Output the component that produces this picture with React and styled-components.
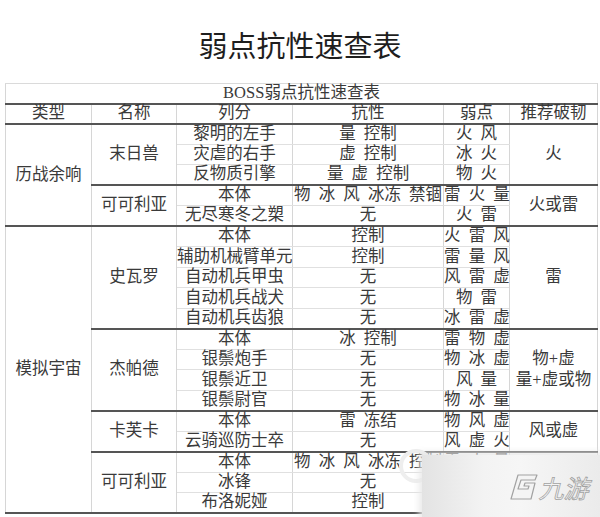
import styled, { createGlobalStyle } from "styled-components";

const GlobalStyle = createGlobalStyle`
    html, body {
        margin: 0;
        padding: 0;
        background: #ffffff;
    }
`;

const Page = styled.div`
    position: relative;
    width: 600px;
    height: 517px;
    overflow: hidden;
    background: #ffffff;
    font-family: "Liberation Serif", "Noto Sans CJK SC", serif;
`;

const Heading = styled.h1`
    margin: 0;
    padding-top: 26px;
    height: 83px;
    box-sizing: border-box;
    text-align: center;
    font-family: "Noto Sans CJK SC", sans-serif;
    font-weight: 400;
    font-size: 29px;
    line-height: 36px;
    color: #1e1e1e;
`;

const Table = styled.table`
    margin-left: 5px;
    width: 592px;
    table-layout: fixed;
    border-collapse: collapse;
    font-size: 16.5px;
    color: #3a3a3a;
    word-spacing: 4px;
`;

const Row = styled.tr`
    height: ${(p) => p.$h}px;
`;

const Cell = styled.td`
    padding: 0;
    text-align: center;
    vertical-align: middle;
    white-space: nowrap;
    line-height: ${(p) => (p.$lh ? p.$lh : 1)};
    border-left: 1px solid #d6d6d6;
    border-right: 1px solid #d6d6d6;
    border-bottom: ${(p) => (p.$thick ? "2px solid #555" : "1px solid #e0e0e0")};
    border-top: ${(p) => (p.$top ? "1px solid #dadada" : "none")};
`;

const Watermark = styled.div`
    position: absolute;
    left: 422px;
    top: 455px;
    width: 178px;
    height: 62px;
    background: linear-gradient(90deg, #e3e3e3 0%, #f3f3f3 35%, #f6f6f6 55%, #ebebeb 100%);
    box-shadow: 0 0 6px 3px rgba(232, 232, 232, 0.9);
    display: flex;
    align-items: center;
    justify-content: flex-end;
    gap: 2px;
    padding-right: 9px;
    padding-top: 2px;
    box-sizing: border-box;
`;

const Brand = styled.span`
    font-family: "Noto Sans CJK SC", sans-serif;
    font-size: 25px;
    line-height: 1;
    color: #f4f4f4;
    -webkit-text-stroke: 0.8px #a2a2a2;
    transform: skewX(-14deg);
`;

const FaintRing = styled.svg`
    position: absolute;
    left: 396px;
    top: 446px;
`;

const groups = [
    {
        type: "历战余响",
        bosses: [
            {
                name: "末日兽",
                rec: ["火"],
                rows: [
                    ["黎明的左手", "量 控制", "火 风"],
                    ["灾虐的右手", "虚 控制", "冰 火"],
                    ["反物质引擎", "量 虚 控制", "物 火"],
                ],
            },
            {
                name: "可可利亚",
                rec: ["火或雷"],
                rows: [
                    ["本体", "物 冰 风 冰冻 禁锢", "雷 火 量"],
                    ["无尽寒冬之槊", "无", "火 雷"],
                ],
            },
        ],
    },
    {
        type: "模拟宇宙",
        bosses: [
            {
                name: "史瓦罗",
                rec: ["雷"],
                rows: [
                    ["本体", "控制", "火 雷 风"],
                    ["辅助机械臂单元", "控制", "雷 量 风"],
                    ["自动机兵甲虫", "无", "风 雷 虚"],
                    ["自动机兵战犬", "无", "物 雷"],
                    ["自动机兵齿狼", "无", "冰 雷 虚"],
                ],
            },
            {
                name: "杰帕德",
                rec: ["物+虚", "量+虚或物"],
                rows: [
                    ["本体", "冰 控制", "雷 物 虚"],
                    ["银鬃炮手", "无", "物 冰 虚"],
                    ["银鬃近卫", "无", "风 量"],
                    ["银鬃尉官", "无", "物 冰 量"],
                ],
            },
            {
                name: "卡芙卡",
                rec: ["风或虚"],
                rows: [
                    ["本体", "雷 冻结", "物 风 虚"],
                    ["云骑巡防士卒", "无", "风 虚 火"],
                ],
            },
            {
                name: "可可利亚",
                rec: ["火或雷"],
                rows: [
                    ["本体", "物 冰 风 冰冻 控制", "雷 火 量"],
                    ["冰锋", "无", "火 雷"],
                    ["布洛妮娅", "控制", "火 雷"],
                ],
            },
        ],
    },
];

const ROW_H = 20.5;

const App = () => {
    const body = [];
    groups.forEach((group) => {
        const total = group.bosses.reduce((n, b) => n + b.rows.length, 0);
        group.bosses.forEach((boss, bi) => {
            boss.rows.forEach((r, ri) => {
                const last = ri === boss.rows.length - 1;
                body.push(
                    <Row $h={ROW_H} key={group.type + boss.name + r[0]}>
                        {bi === 0 && ri === 0 && (
                            <Cell rowSpan={total} $thick>
                                {group.type}
                            </Cell>
                        )}
                        {ri === 0 && (
                            <Cell rowSpan={boss.rows.length} $thick>
                                {boss.name}
                            </Cell>
                        )}
                        <Cell $thick={last}>{r[0]}</Cell>
                        <Cell $thick={last}>{r[1]}</Cell>
                        <Cell $thick={last}>{r[2]}</Cell>
                        {ri === 0 && (
                            <Cell rowSpan={boss.rows.length} $thick $lh={1.27}>
                                {boss.rec.map((t) => (
                                    <div key={t}>{t}</div>
                                ))}
                            </Cell>
                        )}
                    </Row>
                );
            });
        });
    });

    return (
        <Page>
            <GlobalStyle />
            <Heading>弱点抗性速查表</Heading>
            <Table>
                <colgroup>
                    <col style={{ width: 86 }} />
                    <col style={{ width: 85 }} />
                    <col style={{ width: 116 }} />
                    <col style={{ width: 151 }} />
                    <col style={{ width: 66 }} />
                    <col style={{ width: 88 }} />
                </colgroup>
                <tbody>
                    <Row $h={20}>
                        <Cell colSpan={6} $thick $top>
                            BOSS弱点抗性速查表
                        </Cell>
                    </Row>
                    <Row $h={20}>
                        <Cell $thick>类型</Cell>
                        <Cell $thick>名称</Cell>
                        <Cell $thick>列分</Cell>
                        <Cell $thick>抗性</Cell>
                        <Cell $thick>弱点</Cell>
                        <Cell $thick>推荐破韧</Cell>
                    </Row>
                    {body}
                </tbody>
            </Table>

            <FaintRing width="40" height="40" viewBox="0 0 40 40">
                <circle cx="20" cy="20" r="15" fill="none" stroke="#eeeeee" strokeWidth="4" />
            </FaintRing>
            <Watermark>
                <svg width="32" height="30" viewBox="0 0 32 30">
                    <path
                        d="M11 3 H30 L28 8 H14 L11 17 H21 L22 14 H17 L18 11 H28 L24 27 H4 Z"
                        fill="#f4f4f4"
                        stroke="#a2a2a2"
                        strokeWidth="1.2"
                        strokeLinejoin="round"
                    />
                </svg>
                <Brand>九游</Brand>
            </Watermark>
        </Page>
    );
};

export default App;
